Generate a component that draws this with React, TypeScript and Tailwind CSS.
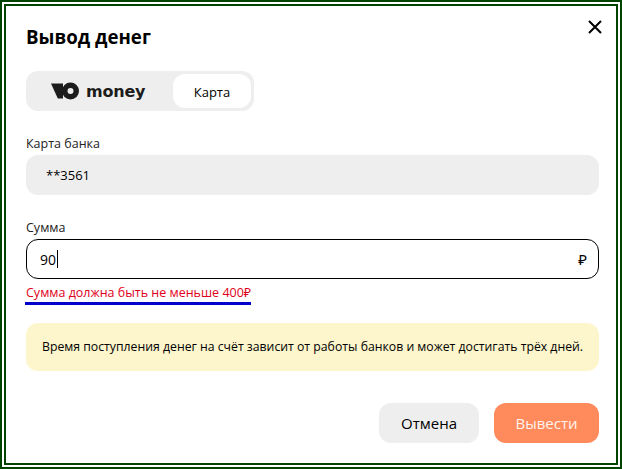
import React from 'react';

const font = { fontFamily: '"Open Sans", "Noto Sans", sans-serif' };

const MoneyLogo: React.FC = () => (
  <div className="flex items-center gap-[7px]">
    <svg width="28" height="18" viewBox="0 0 28 18" fill="#1c1c1c">
      <path d="M0 1.5h12v15H6.8L0 1.5z" />
      <path fillRule="evenodd" d="M19.5 .5a8.5 8.5 0 1 1 0 17a8.5 8.5 0 0 1 0-17zm0 5.5a3 3 0 1 0 0 6a3 3 0 0 0 0-6z" />
    </svg>
    <span className="pt-[1px] font-['DejaVu_Sans'] text-[16px] leading-none font-bold tracking-[-0.2px] text-[#1c1c1c]">money</span>
  </div>
);

export default function App() {
  return (
    <div
      style={font}
      className="relative w-[622px] h-[469px] bg-white border-[6px] border-double border-[#004400] pl-5 pr-[17px] text-black overflow-hidden"
    >
      <button className="absolute right-[14px] top-[14px] text-black">
        <svg width="14" height="14" viewBox="0 0 14 14" fill="none" stroke="currentColor" strokeWidth="2">
          <path d="M1 1l12 12M13 1L1 13" />
        </svg>
      </button>

      <h1 className="mt-[17px] text-[18.7px] leading-7 font-bold">Вывод денег</h1>

      <div className="mt-[20px] flex h-10 w-[228px] items-center rounded-xl bg-[#eeeeee] pl-[25px] pr-[3px]">
        <MoneyLogo />
        <div className="ml-auto flex h-[34px] w-[78px] items-center justify-center rounded-xl bg-white pt-[3px] text-[13px]">
          Карта
        </div>
      </div>

      <label className="mt-[24px] block text-[12.5px] leading-[18px] text-[#222]">Карта банка</label>
      <div className="mt-[2px] flex h-10 items-center rounded-xl bg-[#eeeeee] pl-5 pt-[2px] text-[13px]">**3561</div>

      <label className="mt-[24px] block text-[12.5px] leading-[18px] text-[#222]">Сумма</label>
      <div className="mt-[2px] flex h-10 items-center rounded-xl border border-black pl-[13px] pr-[11px] text-[14px]">
        <span>90</span>
        <span className="ml-px h-[18px] w-px bg-black" />
        <span className="ml-auto text-[15px]">₽</span>
      </div>

      <div className="mt-[5px] -ml-px inline-block border-b-[3px] border-[#0000cc] pl-px text-[12.5px] leading-[18px] text-[#e0001a]">
        Сумма должна быть не меньше 400₽
      </div>

      <div className="mt-[18px] flex h-12 items-center rounded-xl bg-[#fdf6cc] pl-4 text-[12.25px]">
        Время поступления денег на счёт зависит от работы банков и может достигать трёх дней.
      </div>

      <div className="mt-[32px] flex justify-end gap-[15px] text-[15px]">
        <button className="h-10 w-[100px] rounded-xl bg-[#eeeeee]">Отмена</button>
        <button className="h-10 w-[105px] rounded-xl bg-[#ff8a5c] text-[#fff3ec]">Вывести</button>
      </div>
    </div>
  );
}
